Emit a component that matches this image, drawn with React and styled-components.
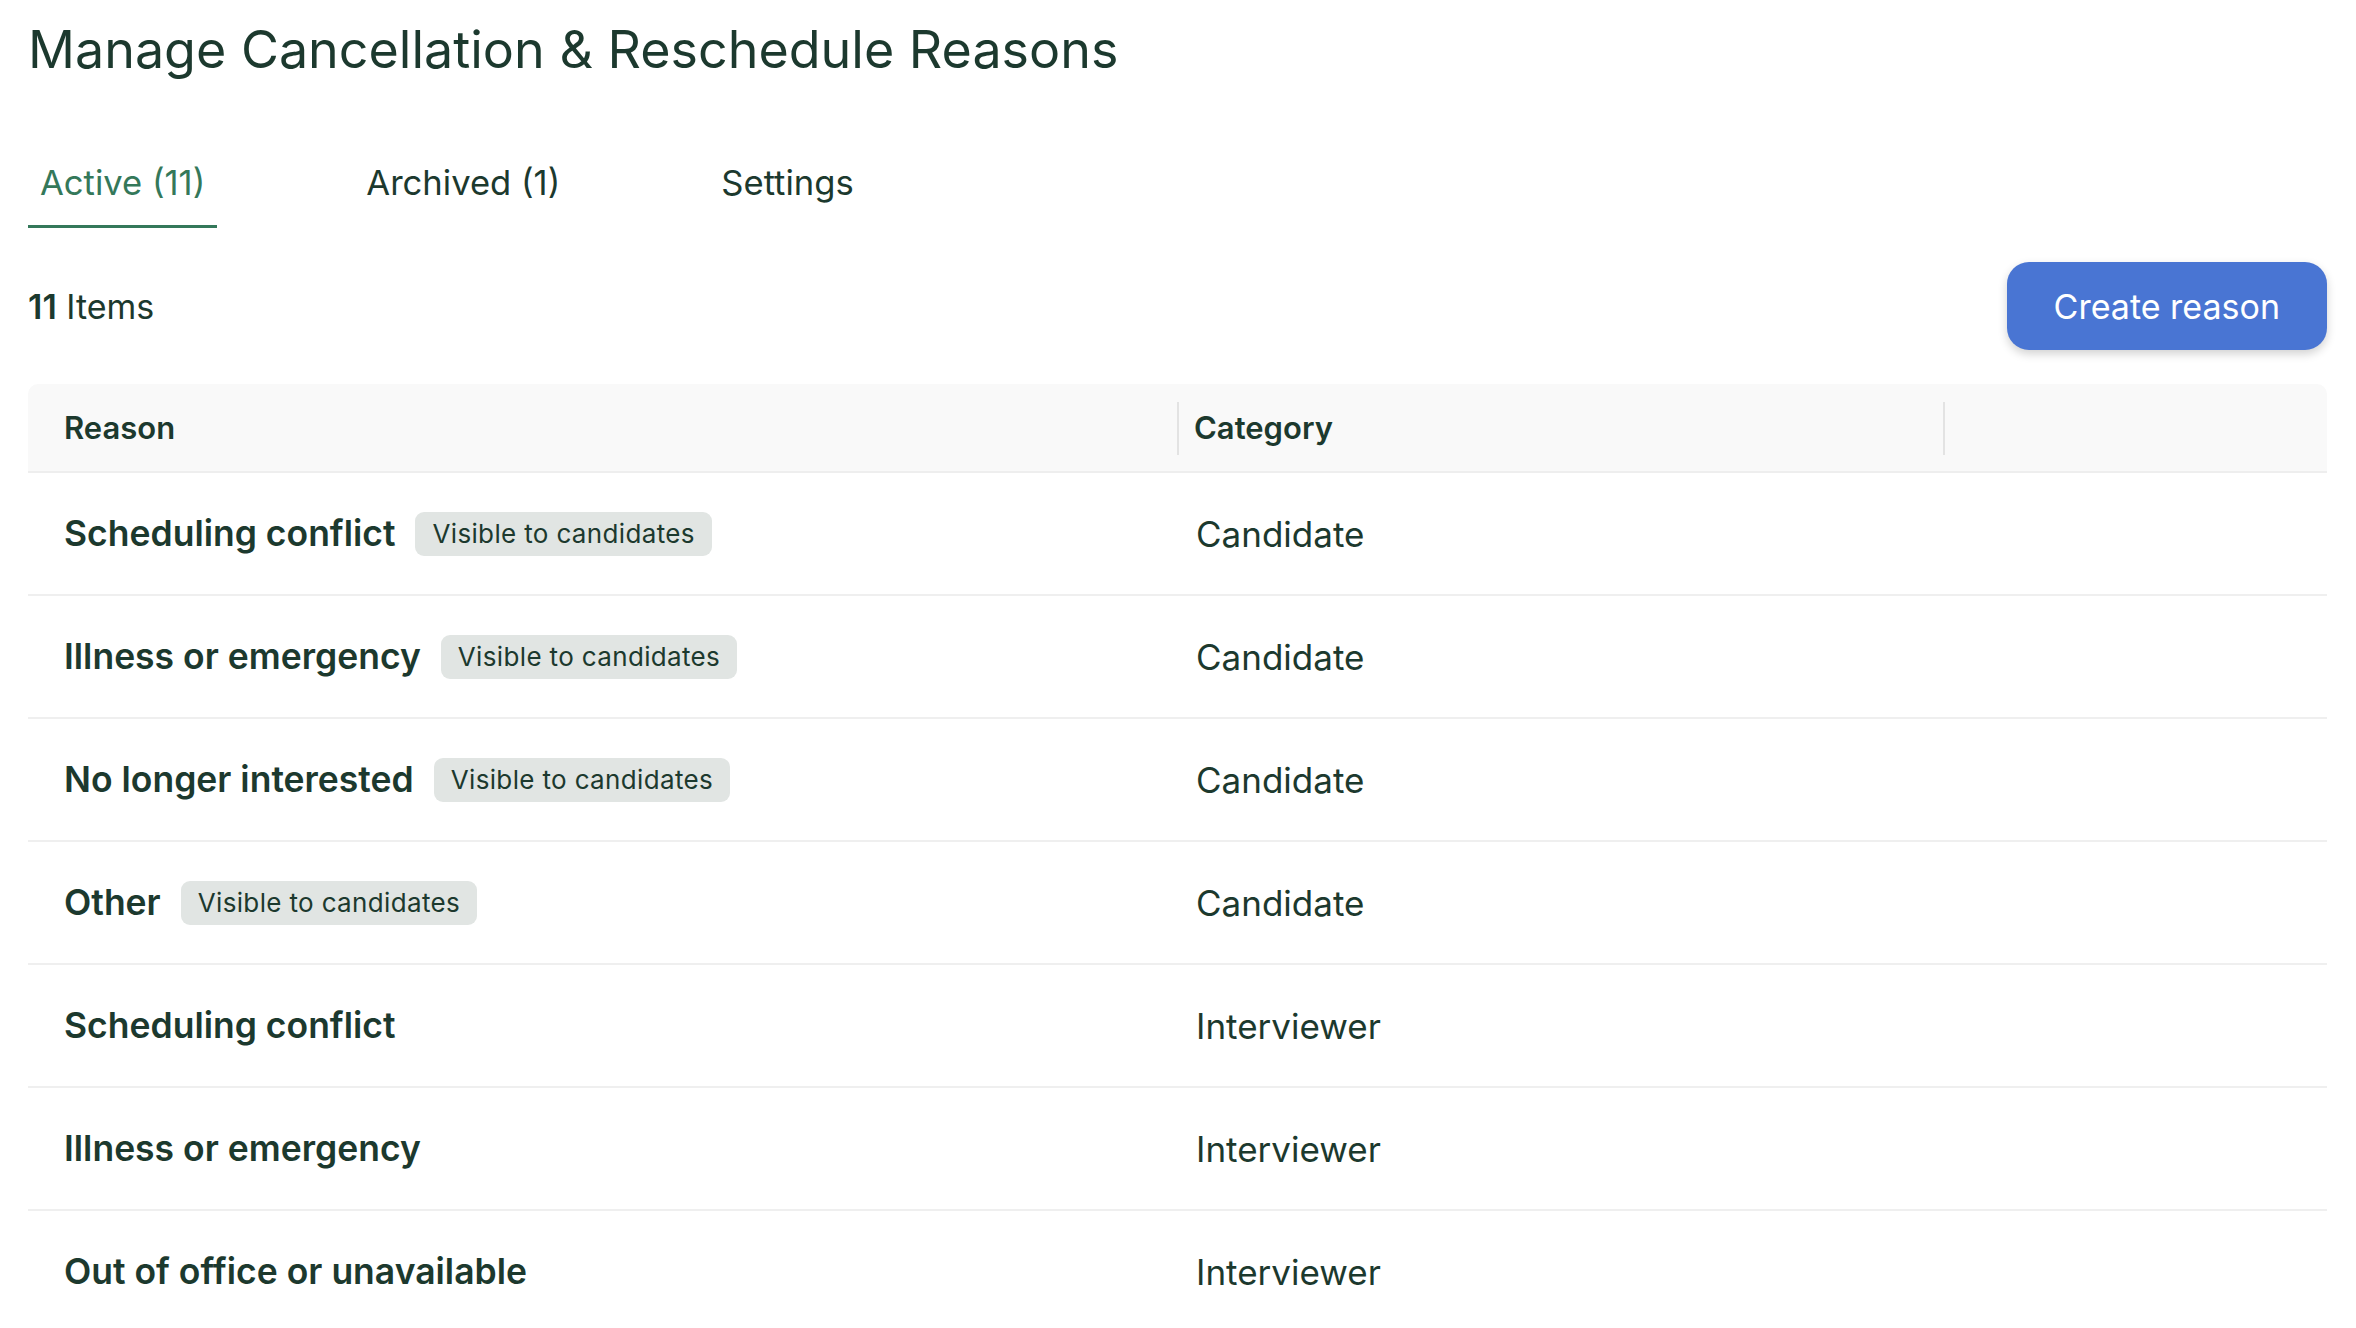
import React from "react";
import styled, { createGlobalStyle } from "styled-components";

const GlobalStyle = createGlobalStyle`
  html, body {
    margin: 0;
    padding: 0;
    background: #ffffff;
    font-family: "Inter", "Liberation Sans", sans-serif;
    color: #1c392e;
  }
  * { box-sizing: border-box; }
`;

const Page = styled.div`
  padding: 18px 29px 0 28px;
  height: 1328px;
  overflow: hidden;
`;

const Title = styled.h1`
  margin: 0;
  font-size: 52px;
  line-height: 64px;
  font-weight: 400;
  color: #1c392e;
`;

const TabBar = styled.div`
  display: flex;
  gap: 137px;
  margin-top: 63px;
`;

const Tab = styled.button`
  background: none;
  border: none;
  margin: 0;
  padding: 15px 12px 21px;
  font-family: inherit;
  font-size: 34.6px;
  line-height: 44px;
  font-weight: 400;
  color: ${(p) => (p.$active ? "#34785a" : "#1c392e")};
  border-bottom: 3px solid ${(p) => (p.$active ? "#34785a" : "transparent")};
  cursor: pointer;
`;

const Toolbar = styled.div`
  display: flex;
  align-items: center;
  justify-content: space-between;
  margin-top: 34px;
  height: 88px;
`;

const Count = styled.div`
  font-size: 34px;
  color: #1c392e;
  b { font-weight: 600; }
`;

const PrimaryButton = styled.button`
  height: 88px;
  padding: 0 47px;
  border: none;
  border-radius: 22px;
  background: #4975d3;
  color: #ffffff;
  font-family: inherit;
  font-size: 34px;
  font-weight: 400;
  box-shadow: 0 4px 10px rgba(0, 0, 0, 0.18);
  cursor: pointer;
`;

const Table = styled.div`
  margin-top: 34px;
`;

const cols = "1149px 766px 1fr";

const HeaderRow = styled.div`
  display: grid;
  grid-template-columns: ${cols};
  height: 89px;
  background: #f9f9f9;
  border-bottom: 2px solid #eeeeee;
  border-radius: 10px 10px 0 0;
`;

const HeaderCell = styled.div`
  display: flex;
  align-items: center;
  padding-left: ${(p) => (p.$first ? "36px" : "17px")};
  font-size: 31px;
  font-weight: 600;
  color: #1c392e;
  position: relative;
  ${(p) =>
    !p.$first &&
    `
    &::before {
      content: "";
      position: absolute;
      left: 0;
      top: 18px;
      bottom: 16px;
      width: 2px;
      background: #e3e3e3;
    }
  `}
`;

const Row = styled.div`
  display: grid;
  grid-template-columns: ${cols};
  height: 123px;
  border-bottom: 2px solid #efefef;
`;

const Cell = styled.div`
  display: flex;
  align-items: center;
  padding-left: ${(p) => (p.$first ? "36px" : "19px")};
  font-size: 35px;
  color: #1c392e;
`;

const ReasonName = styled.span`
  font-size: 35.5px;
  font-weight: 600;
`;

const Badge = styled.span`
  display: inline-flex;
  align-items: center;
  height: 44px;
  margin-left: 20px;
  padding: 0 17px;
  border-radius: 9px;
  background: #e1e5e3;
  color: #1c392e;
  font-size: 26px;
  letter-spacing: 0.35px;
`;

const rows = [
  { reason: "Scheduling conflict", category: "Candidate", visible: true },
  { reason: "Illness or emergency", category: "Candidate", visible: true },
  { reason: "No longer interested", category: "Candidate", visible: true },
  { reason: "Other", category: "Candidate", visible: true },
  { reason: "Scheduling conflict", category: "Interviewer" },
  { reason: "Illness or emergency", category: "Interviewer" },
  { reason: "Out of office or unavailable", category: "Interviewer" },
];

export default function App() {
  return (
    <>
      <GlobalStyle />
      <Page>
        <Title>Manage Cancellation &amp; Reschedule Reasons</Title>
        <TabBar>
          <Tab $active>Active (11)</Tab>
          <Tab>Archived (1)</Tab>
          <Tab>Settings</Tab>
        </TabBar>
        <Toolbar>
          <Count>
            <b>11</b> Items
          </Count>
          <PrimaryButton>Create reason</PrimaryButton>
        </Toolbar>
        <Table>
          <HeaderRow>
            <HeaderCell $first>Reason</HeaderCell>
            <HeaderCell>Category</HeaderCell>
            <HeaderCell />
          </HeaderRow>
          {rows.map((r, i) => (
            <Row key={i}>
              <Cell $first>
                <ReasonName>{r.reason}</ReasonName>
                {r.visible && <Badge>Visible to candidates</Badge>}
              </Cell>
              <Cell>{r.category}</Cell>
              <Cell />
            </Row>
          ))}
        </Table>
      </Page>
    </>
  );
}
